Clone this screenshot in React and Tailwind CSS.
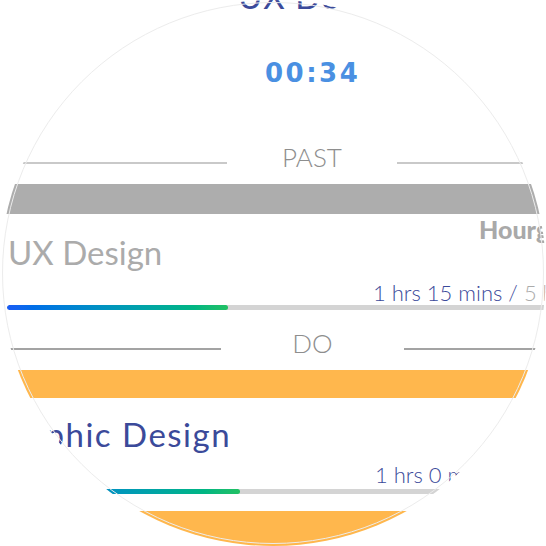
const items = {
  past: {
    category: 'Hourglass',
    title: 'UX Design',
    spent: '1 hrs 15 mins /',
    goal: '5 hrs',
    progress: 221,
  },
  todo: {
    title: 'Graphic Design',
    spent: '1 hrs 0 mins /',
    goal: '5 hrs',
    progress: 233,
  },
};

function Divider({ label, leftWidth, gapWidth, lineClass, className }) {
  return (
    <div className={`flex h-[26px] items-start ${className}`}>
      <div className={`mt-[18px] h-[2px] shrink-0 ${lineClass}`} style={{ width: leftWidth }} />
      <div
        className="shrink-0 text-center font-['Lato',sans-serif] text-[26px] leading-none font-light text-[#8e8e8e]"
        style={{ width: gapWidth }}
      >
        {label}
      </div>
      <div className={`mt-[18px] h-[2px] flex-1 ${lineClass}`} />
    </div>
  );
}

function Progress({ width, className }) {
  return (
    <div className={`flex h-[5px] pl-[7px] ${className}`}>
      <div className="flex h-full flex-1 overflow-hidden rounded-full bg-[#d4d4d4]">
        <div className="h-full rounded-full bg-linear-to-r from-[#1a5cf5] to-[#21c163]" style={{ width }} />
      </div>
    </div>
  );
}

export default function App() {
  const { past, todo } = items;

  return (
    <div className="relative h-[546px] w-[546px] bg-white">
      <div className="h-[546px] w-[546px] overflow-hidden rounded-full bg-white">
        <div className="flex flex-col whitespace-nowrap">
          <div className="mt-[-20px] pl-[238px] font-['Lato',sans-serif] text-[33px] leading-none tracking-[1px] text-[#3b4a9a]">
            UX Design
          </div>

          <div className="mt-[47px] pl-[265px] font-['DejaVu_Sans',sans-serif] text-[26px] leading-none font-bold tracking-[2.5px] text-[#4a90e2]">
            00:34
          </div>

          <Divider label="PAST" leftWidth={227} gapWidth={170} lineClass="bg-[#c9c9c9]" className="mt-[58px]" />

          <div className="mt-[14px] h-[30px] bg-[#adadad]" />

          <div className="mt-[3px] pl-[479px] font-['Lato',sans-serif] text-[25px] leading-none font-black text-[#a9a9a9]">
            {past.category}
          </div>
          <div className="mt-[-6px] pl-[8px] font-['Lato',sans-serif] text-[33px] leading-none text-[#ababab]">
            {past.title}
          </div>
          <div className="mt-[13px] pl-[373px] font-['Lato',sans-serif] text-[22px] leading-none font-light text-[#3b4a9a]">
            {past.spent} <span className="text-[#ababab]">{past.goal}</span>
          </div>
          <Progress width={past.progress} className="mt-[1px]" />

          <Divider label="DO" leftWidth={221} gapWidth={183} lineClass="bg-[#a3a3a3]" className="mt-[20px]" />

          <div className="mt-[14px] h-[28px] bg-[#ffb74d]" />

          <div className="mt-[20px] font-['Lato',sans-serif] text-[33px] leading-none tracking-[1.5px] text-[#3b4a9a]">
            <span className="ml-[-11px]">{todo.title}</span>
          </div>
          <div className="mt-[13px] pl-[375px] font-['Lato',sans-serif] text-[22px] leading-none font-light text-[#3b4a9a]">
            {todo.spent} <span className="text-[#ababab]">{todo.goal}</span>
          </div>
          <Progress width={todo.progress} className="mt-[3px]" />

          <div className="mt-[17px] h-[40px] bg-[#ffb74d]" />
        </div>
      </div>
      <div className="pointer-events-none absolute inset-[2px] rounded-full border border-[#ececec]" />
    </div>
  );
}
